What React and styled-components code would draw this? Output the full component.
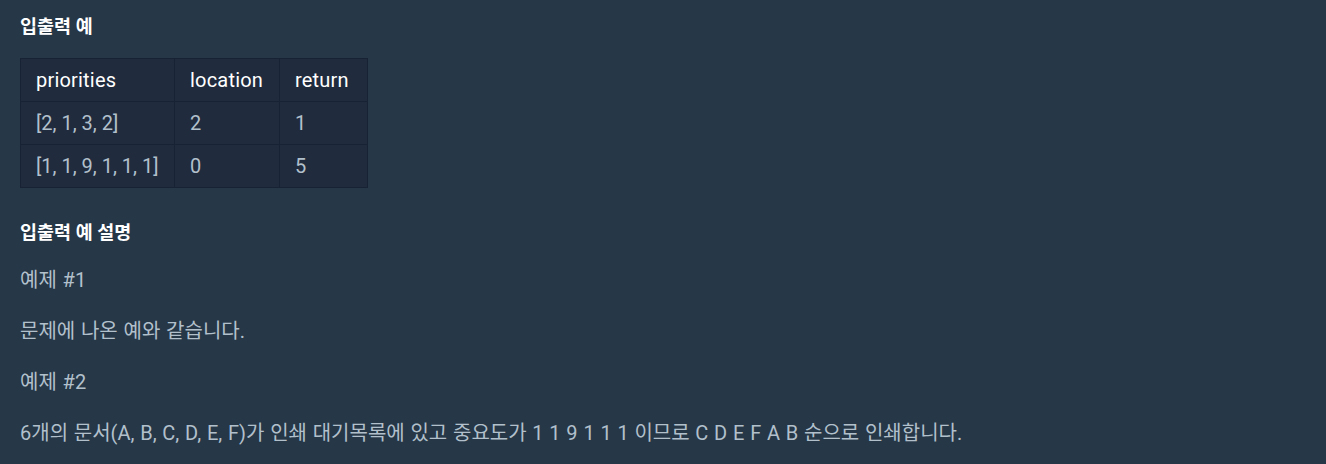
import React from "react";
import styled, { createGlobalStyle } from "styled-components";

const GlobalStyle = createGlobalStyle`
  html, body {
    margin: 0;
    padding: 0;
    background: #263747;
  }
  body {
    font-family: Roboto, "Noto Sans CJK KR", sans-serif;
  }
`

const Page = styled.div`
  width: 1326px;
  height: 464px;
  box-sizing: border-box;
  padding: 14px 20px 0;
  background: #263747;
  color: #b2c0cc;
  overflow: hidden;
`

const Heading = styled.h5`
  margin: ${(p) => p.$top || 0}px 0 0;
  font-size: 18.5px;
  line-height: 26px;
  font-weight: 700;
  color: #ffffff;
`

const Table = styled.table`
  margin-top: 18px;
  border-collapse: collapse;
  background: #202b3d;
`

const HeadCell = styled.th`
  box-sizing: border-box;
  width: ${(p) => p.$w}px;
  border: 1px solid #172334;
  padding: 6px 8px 5px 15px;
  font-size: 20px;
  line-height: 31px;
  font-weight: 400;
  text-align: left;
  color: #ffffff;
  letter-spacing: 0.2px;
  white-space: nowrap;
`

const Cell = styled.td`
  border: 1px solid #172334;
  padding: 6px 8px 5px 15px;
  font-size: 20px;
  line-height: 31px;
  text-align: left;
  color: #b2c0cc;
  white-space: nowrap;
`

const Paragraph = styled.p`
  margin: ${(p) => p.$top || 21}px 0 0;
  font-size: 20px;
  line-height: 30px;
  word-spacing: 0.8px;
`

const columns = [
  { title: "priorities", width: 154 },
  { title: "location", width: 105 },
  { title: "return", width: 88 },
];

const rows = [
  ["[2, 1, 3, 2]", "2", "1"],
  ["[1, 1, 9, 1, 1, 1]", "0", "5"],
];

const App = () => {
  return (
    <Page>
      <GlobalStyle />
      <Heading>입출력 예</Heading>
      <Table>
        <thead>
          <tr>
            {columns.map((col) => (
              <HeadCell key={col.title} $w={col.width}>{col.title}</HeadCell>
            ))}
          </tr>
        </thead>
        <tbody>
          {rows.map((row) => (
            <tr key={row[0]}>
              {row.map((value, i) => (
                <Cell key={i}>{value}</Cell>
              ))}
            </tr>
          ))}
        </tbody>
      </Table>
      <Heading $top={32}>입출력 예 설명</Heading>
      <Paragraph $top={19}>예제 #1</Paragraph>
      <Paragraph>문제에 나온 예와 같습니다.</Paragraph>
      <Paragraph>예제 #2</Paragraph>
      <Paragraph>
        6개의 문서(A, B, C, D, E, F)가 인쇄 대기목록에 있고 중요도가 1 1 9 1 1 1 이므로 C D E F A B 순으로 인쇄합니다.
      </Paragraph>
    </Page>
  )
}

export default App;
